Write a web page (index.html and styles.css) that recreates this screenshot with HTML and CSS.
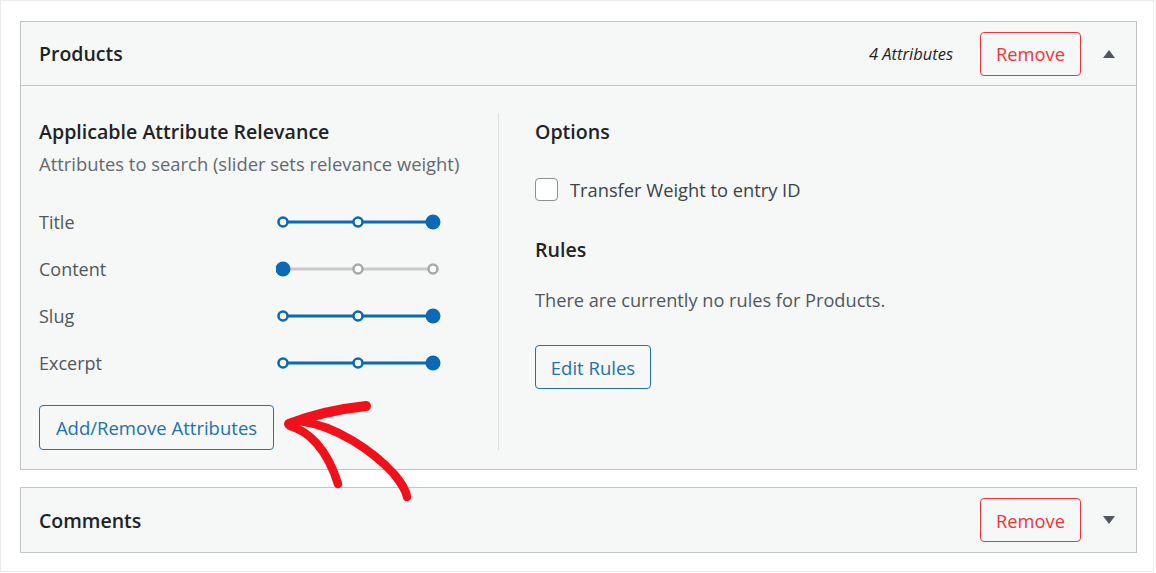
FILE: index.html
```html
<!DOCTYPE html>
<html lang="en">
<head>
<meta charset="utf-8">
<title>Source Settings</title>
<link rel="stylesheet" href="styles.css">
</head>
<body>
<div class="frame">
  <section class="panel">
    <header class="panel-head">
      <h2 class="panel-title">Products</h2>
      <div class="panel-actions">
        <span class="attr-count">4 Attributes</span>
        <button class="btn-remove">Remove</button>
        <span class="toggle toggle-up"></span>
      </div>
    </header>
    <div class="panel-body">
      <div class="col col-left">
        <h3 class="sec-title">Applicable Attribute Relevance</h3>
        <p class="sec-desc">Attributes to search (slider sets relevance weight)</p>
        <div class="attr-list">
          <div class="attr-row">
            <span class="attr-label">Title</span>
            <svg class="slider" width="170" height="20" viewBox="0 0 170 20">
              <line x1="7" y1="10" x2="157" y2="10" class="track on"/>
              <circle cx="7" cy="10" r="4.5" class="knob-h on"/>
              <circle cx="82" cy="10" r="4.5" class="knob-h on"/>
              <circle cx="157" cy="10" r="7.5" class="knob-f"/>
            </svg>
          </div>
          <div class="attr-row">
            <span class="attr-label">Content</span>
            <svg class="slider" width="170" height="20" viewBox="0 0 170 20">
              <line x1="7" y1="10" x2="157" y2="10" class="track off"/>
              <circle cx="82" cy="10" r="4.5" class="knob-h off"/>
              <circle cx="157" cy="10" r="4.5" class="knob-h off"/>
              <circle cx="7" cy="10" r="7.5" class="knob-f"/>
            </svg>
          </div>
          <div class="attr-row">
            <span class="attr-label">Slug</span>
            <svg class="slider" width="170" height="20" viewBox="0 0 170 20">
              <line x1="7" y1="10" x2="157" y2="10" class="track on"/>
              <circle cx="7" cy="10" r="4.5" class="knob-h on"/>
              <circle cx="82" cy="10" r="4.5" class="knob-h on"/>
              <circle cx="157" cy="10" r="7.5" class="knob-f"/>
            </svg>
          </div>
          <div class="attr-row">
            <span class="attr-label">Excerpt</span>
            <svg class="slider" width="170" height="20" viewBox="0 0 170 20">
              <line x1="7" y1="10" x2="157" y2="10" class="track on"/>
              <circle cx="7" cy="10" r="4.5" class="knob-h on"/>
              <circle cx="82" cy="10" r="4.5" class="knob-h on"/>
              <circle cx="157" cy="10" r="7.5" class="knob-f"/>
            </svg>
          </div>
        </div>
        <button class="btn-outline btn-attrs">Add/Remove Attributes</button>
      </div>
      <div class="col col-right">
        <h3 class="sec-title">Options</h3>
        <label class="check-row">
          <span class="checkbox"></span>
          <span class="check-label">Transfer Weight to entry ID</span>
        </label>
        <h3 class="sec-title rules-title">Rules</h3>
        <p class="rules-text">There are currently no rules for Products.</p>
        <button class="btn-outline btn-rules">Edit Rules</button>
      </div>
    </div>
  </section>

  <section class="panel panel-collapsed">
    <header class="panel-head panel-head-solo">
      <h2 class="panel-title">Comments</h2>
      <div class="panel-actions">
        <button class="btn-remove">Remove</button>
        <span class="toggle toggle-down"></span>
      </div>
    </header>
  </section>
</div>

<svg class="annotation" width="1156" height="573" viewBox="0 0 1156 573">
  <path d="M289 424 C 312 415, 338 409, 366 406" class="stroke s-thick"/>
  <path d="M290 426 C 308 431, 327 448, 338 484" class="stroke"/>
  <path d="M300 421 C 336 426, 372 450, 394 474 C 402 484, 406 490, 407 497" class="stroke"/>
</svg>
</body>
</html>
```

FILE: styles.css
```css
* { box-sizing: border-box; }

html, body {
  margin: 0;
  padding: 0;
  background: #ffffff;
}

body {
  font-family: "Open Sans", "Noto Sans", "Liberation Sans", sans-serif;
  color: #1d2327;
  width: 1156px;
  height: 573px;
  position: relative;
  overflow: hidden;
}

.frame {
  width: 1154px;
  height: 572px;
  border: 1px solid #ececec;
  padding: 20px 0 0 19px;
}

.panel {
  width: 1117px;
  background: #f6f7f7;
  border: 1px solid #c3c4c7;
}

.panel-collapsed {
  margin-top: 17px;
}

.panel-head {
  height: 64px;
  border-bottom: 1px solid #c3c4c7;
  display: flex;
  align-items: center;
  justify-content: space-between;
  padding: 0 21px 0 18px;
}

.panel-head-solo {
  border-bottom: none;
}

.panel-title {
  margin: 0;
  font-size: 19.5px;
  font-weight: 600;
  color: #1d2327;
}

.panel-actions {
  display: flex;
  align-items: center;
}

.attr-count {
  font-style: italic;
  font-size: 16.5px;
  color: #1d2327;
  margin-right: 27px;
}

.btn-remove {
  width: 101px;
  height: 44px;
  border: 1px solid #f0353a;
  border-radius: 4px;
  background: transparent;
  color: #f0353a;
  font-family: inherit;
  font-size: 18.3px;
  padding: 0;
  margin-right: 22px;
}

.toggle {
  width: 0;
  height: 0;
  border-left: 6px solid transparent;
  border-right: 6px solid transparent;
}

.toggle-up {
  border-bottom: 8px solid #50575e;
}

.toggle-down {
  border-top: 8px solid #50575e;
}

.panel-body {
  display: flex;
  padding: 27px 0 19px 18px;
}

.col-left {
  width: 460px;
  border-right: 1px solid #dcdcde;
}

.col-right {
  padding-left: 36px;
}

.sec-title {
  margin: 7px 0 0;
  font-size: 19.6px;
  line-height: 24px;
  font-weight: 600;
  color: #1d2327;
}

.sec-desc {
  margin: 8px 0 0;
  font-size: 18.4px;
  line-height: 24px;
  color: #646970;
}

.attr-list {
  margin-top: 22px;
}

.attr-row {
  display: grid;
  grid-template-columns: 237px 170px;
  align-items: center;
  height: 47px;
}

.attr-label {
  font-size: 18px;
  color: #50575e;
}

.slider { display: block; }

.track { stroke-width: 3; }
.track.on { stroke: #0a6ab6; }
.track.off { stroke: #c9cacc; }

.knob-h { fill: #ffffff; stroke-width: 2.6; }
.knob-h.on { stroke: #0a6ab6; }
.knob-h.off { stroke: #a7aaad; }

.knob-f { fill: #0a6ab6; }

.btn-outline {
  display: block;
  height: 45px;
  border: 1px solid #2271b1;
  border-radius: 4px;
  background: transparent;
  color: #2271b1;
  font-family: inherit;
  font-size: 18.5px;
  padding: 0;
}

.btn-attrs {
  width: 235px;
  margin-top: 19px;
}

.btn-rules {
  width: 116px;
  height: 44px;
  margin-top: 33px;
}

.check-row {
  display: flex;
  align-items: center;
  margin-top: 34px;
  height: 22px;
}

.checkbox {
  width: 23px;
  height: 23px;
  border: 1px solid #8c8f94;
  border-radius: 4px;
  background: #ffffff;
  margin-right: 12px;
}

.check-label {
  font-size: 18.3px;
  color: #3c434a;
}

.rules-title {
  margin-top: 38px;
}

.rules-text {
  margin: 26px 0 0;
  font-size: 18.2px;
  line-height: 24px;
  color: #50575e;
}

.annotation {
  position: absolute;
  top: 0;
  left: 0;
  pointer-events: none;
}

.stroke {
  fill: none;
  stroke: #f2111a;
  stroke-width: 8.5;
  stroke-linecap: round;
  stroke-linejoin: round;
}

.s-thick { stroke-width: 10; }
```
